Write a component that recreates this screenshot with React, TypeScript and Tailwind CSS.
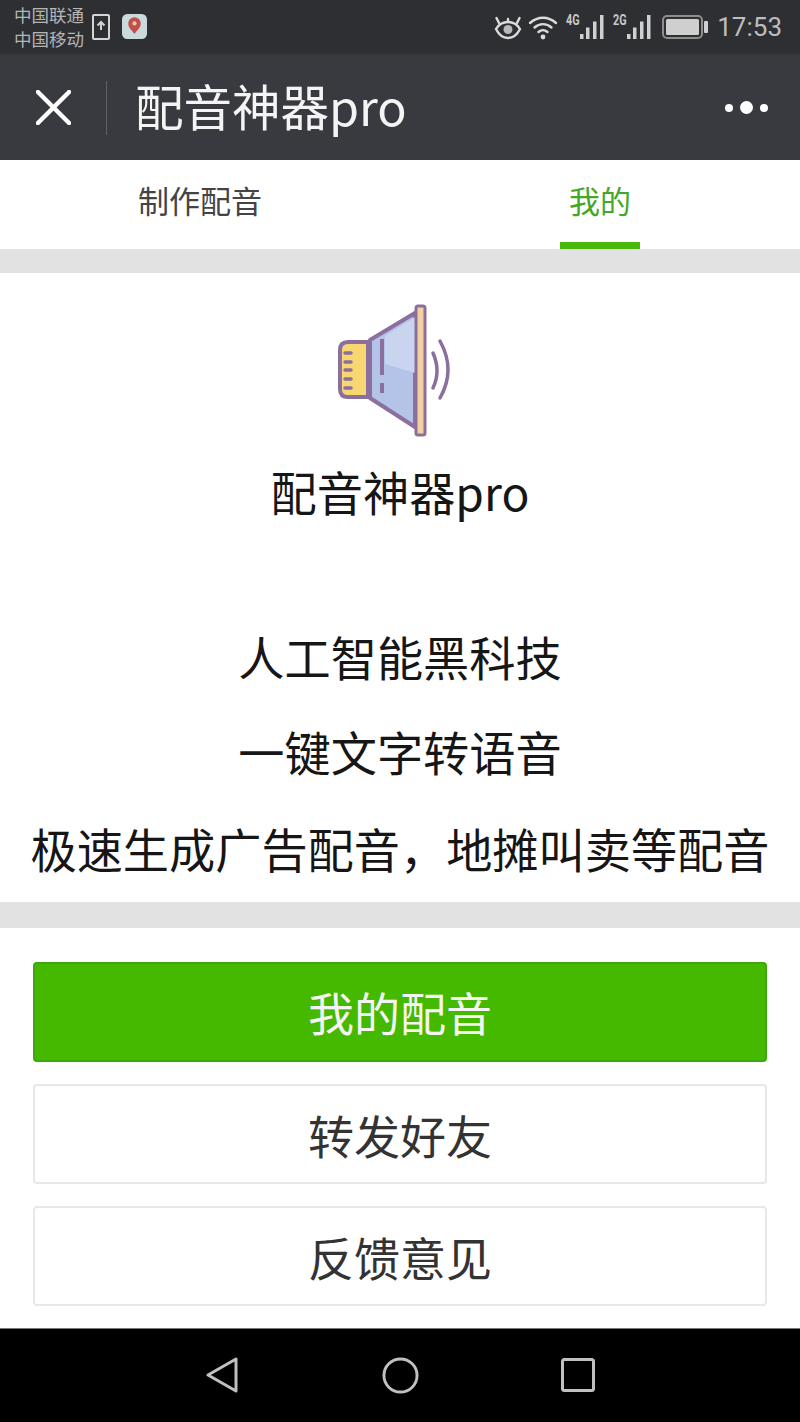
const F = "font-['Noto_Sans_CJK_SC',sans-serif]";

function Signal({ label }: { label: string }) {
  return (
    <div className="relative h-[28px] w-[39px]">
      <span className="absolute left-0 top-0 origin-left scale-x-[0.72] font-['Roboto',sans-serif] text-[15px] font-bold leading-[14px] text-[#c8c8c8]">{label}</span>
      <svg viewBox="0 0 39 28" className="absolute inset-0 h-[28px] w-[39px]" fill="#d0d0d0">
        <rect x="14" y="21" width="3.500" height="5" />
        <rect x="20" y="14.500" width="3.500" height="11.500" />
        <rect x="27" y="8.500" width="3.500" height="17.500" />
        <rect x="34" y="2" width="3.500" height="24" />
      </svg>
    </div>
  );
}

function StatusBar() {
  return (
    <div className="flex h-[53px] items-center justify-between bg-[#2e2f33] pl-[14px] pr-[18px]">
      <div className="flex items-center">
        <div className={`${F} flex w-[72px] flex-col text-[17.500px] leading-[24px] text-[#b5b5b5]`}>
          <span className="whitespace-nowrap">中国联通</span>
          <span className="whitespace-nowrap">中国移动</span>
        </div>
        <svg viewBox="0 0 18 26" className="ml-[6px] h-[26px] w-[18px]" fill="none" stroke="#d4d4d4" strokeWidth="2">
          <rect x="1" y="1" width="16" height="24" rx="1" />
          <path d="M9 16V8M5.500 11.500 9 8l3.500 3.500" />
        </svg>
        <svg viewBox="0 0 24 24" className="ml-[12px] h-[25px] w-[25px]">
          <rect width="24" height="24" rx="5" fill="#c9d9dc" />
          <path d="M12 19c-3-4-6-6-6-10a6 6 0 0 1 12 0c0 4-3 6-6 10Z" fill="#c2504a" />
          <circle cx="12" cy="9" r="2" fill="#e8c9a8" />
        </svg>
      </div>
      <div className="flex items-center">
        <svg viewBox="0 0 28 26" className="h-[26px] w-[28px]" fill="none" stroke="#dcdcdc" strokeWidth="2.400" strokeLinecap="round">
          <path d="M2 15c3-5 7-7 12-7s9 2 12 7c-3 6-7 9-12 9s-9-3-12-9Z" />
          <circle cx="14" cy="15.500" r="4.500" fill="#b9b9b9" stroke="none" />
          <path d="M5 9 2.500 4M23 9l2.500-5M14 7V5" />
        </svg>
        <svg viewBox="0 0 30 26" className="ml-[6px] h-[26px] w-[30px]" fill="none" stroke="#dcdcdc" strokeWidth="2.400" strokeLinecap="round">
          <path d="M2 9c8-7 18-7 26 0M6.500 13.500c5-4.500 12-4.500 17 0M10.500 18c3-2.500 6-2.500 9 0" />
          <circle cx="15" cy="23" r="2.400" fill="#dcdcdc" stroke="none" />
        </svg>
        <div className="ml-[8px]"><Signal label="4G" /></div>
        <div className="ml-[8px]"><Signal label="2G" /></div>
        <svg viewBox="0 0 46 24" className="ml-[10px] h-[24px] w-[46px]">
          <rect x="1" y="1" width="39" height="22" rx="4" fill="none" stroke="#8d8d8d" strokeWidth="2" />
          <rect x="4" y="4" width="33" height="16" rx="1.500" fill="#cfcfcf" />
          <rect x="42" y="6" width="4" height="12" rx="1" fill="#cfcfcf" />
        </svg>
        <span className="ml-[9px] font-['Roboto',sans-serif] text-[26px] font-normal leading-none text-[#bdbdbd]">17:53</span>
      </div>
    </div>
  );
}

function TitleBar() {
  return (
    <div className="flex h-[107px] items-center border-t-2 border-[#333436] bg-[#393a3f]">
      <svg viewBox="0 0 36 36" className="ml-[36px] h-[35px] w-[35px]" stroke="#fff" strokeWidth="4.500" strokeLinecap="round">
        <path d="M2 2l32 32M34 2 2 34" />
      </svg>
      <div className="ml-[35px] h-[54px] w-px bg-[#626367]" />
      <span className={`${F} ml-[28px] pb-[5px] text-[48.500px] leading-none text-[#f4f4f4]`}>配音神器pro</span>
      <div className="ml-auto mr-[32px] flex items-center gap-[7px]">
        <span className="h-[8px] w-[8px] rounded-full bg-white" />
        <span className="h-[13px] w-[13px] rounded-full bg-white" />
        <span className="h-[8px] w-[8px] rounded-full bg-white" />
      </div>
    </div>
  );
}

function Tabs() {
  return (
    <div className={`${F} grid h-[89px] grid-cols-2 bg-white text-[31px]`}>
      <div className="flex items-center justify-center pb-[8px] text-[#444]">制作配音</div>
      <div className="flex justify-center">
        <div className="flex w-[80px] items-center justify-center border-b-[7px] border-[#46b90a] pb-[1px] text-[#43a82a]">我的</div>
      </div>
    </div>
  );
}

function Speaker() {
  return (
    <svg viewBox="0 0 130 135" className="h-[135px] w-[130px]" strokeLinejoin="round" stroke="#8b6f9e">
      <path d="M35 36 80 9v114L35 94Z" fill="#b4c3e8" strokeWidth="4" />
      <path d="M50 32 80 13v56L50 60Z" fill="#c9d4ee" stroke="none" />
      <path d="M5 46q0-8 8-8h20v55H13q-8 0-8-8Z" fill="#f8d672" strokeWidth="4" />
      <rect x="81" y="2" width="9" height="129" rx="2" fill="#f4cfa0" strokeWidth="3" />
      <path d="M47 35V71M47 79V89" strokeWidth="4" fill="none" />
      <path d="M10 49h6M10 58h6M10 66h6M10 75h6M10 84h6" strokeWidth="3.500" strokeLinecap="round" />
      <path d="M98 49q8 18 0 35" fill="none" strokeWidth="3.500" strokeLinecap="round" />
      <path d="M105 37q16 29 0 57" fill="none" strokeWidth="3.500" strokeLinecap="round" />
    </svg>
  );
}

function Hero() {
  return (
    <div className={`${F} flex h-[629px] flex-col items-center bg-white pt-[31px] text-[46.200px] text-[#161616]`}>
      <Speaker />
      <div className="mt-[22px] leading-[60px]">配音神器pro</div>
      <div className="mt-[105px] leading-[60px]">人工智能黑科技</div>
      <div className="mt-[35px] leading-[60px]">一键文字转语音</div>
      <div className="mt-[37px] whitespace-nowrap leading-[60px]">极速生成广告配音，地摊叫卖等配音</div>
    </div>
  );
}

function Buttons() {
  return (
    <div className={`${F} flex h-[400px] flex-col gap-[22px] bg-white px-[33px] pt-[34px] text-[46px]`}>
      <div className="flex h-[100px] items-center justify-center rounded-[4px] border-2 border-[#3ba80c] bg-[#45b900] pb-[2px] text-[#f4f4f4]">我的配音</div>
      <div className="flex h-[100px] items-center justify-center rounded-[4px] border-2 border-[#e8e8e8] bg-white text-[#333]">转发好友</div>
      <div className="flex h-[100px] items-center justify-center rounded-[4px] border-2 border-[#e8e8e8] bg-white text-[#333]">反馈意见</div>
    </div>
  );
}

function NavBar() {
  return (
    <div className="h-[94px] border-t border-[#777] bg-black">
      <div className="flex h-full items-center justify-between px-[205px] pb-[1px]">
        <svg viewBox="0 0 34 36" className="h-[36px] w-[34px]" fill="none" stroke="#c0c0c0" strokeWidth="3" strokeLinejoin="round">
          <path d="M31 2v32L3 18Z" />
        </svg>
        <svg viewBox="0 0 38 38" className="h-[37px] w-[37px]" fill="none" stroke="#c0c0c0" strokeWidth="3">
          <circle cx="19" cy="19" r="17" />
        </svg>
        <svg viewBox="0 0 34 34" className="h-[34px] w-[34px]" fill="none" stroke="#c0c0c0" strokeWidth="3">
          <rect x="1.500" y="1.500" width="31" height="31" rx="2" />
        </svg>
      </div>
    </div>
  );
}

export default function App() {
  return (
    <div className="flex h-[1422px] w-[800px] flex-col overflow-hidden bg-white">
      <StatusBar />
      <TitleBar />
      <Tabs />
      <div className="h-[24px] bg-[#e2e2e2]" />
      <Hero />
      <div className="h-[26px] bg-[#e2e2e2]" />
      <Buttons />
      <NavBar />
    </div>
  );
}
